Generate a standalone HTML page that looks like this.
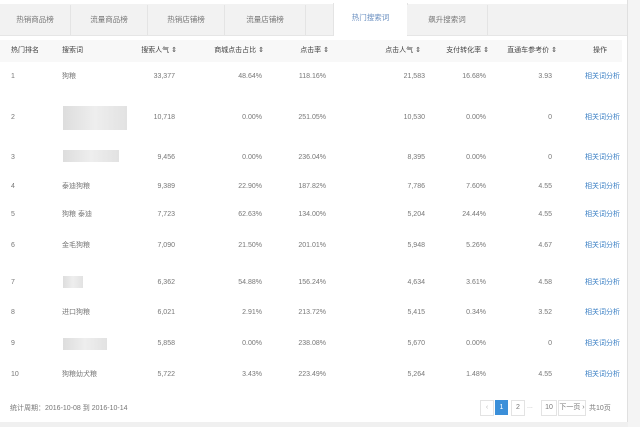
<!DOCTYPE html><html><head><meta charset="utf-8"><style>
body{margin:0;width:640px;height:427px;background:#f4f4f4;font-family:"Liberation Sans","Noto Sans CJK SC",sans-serif;font-size:7px;color:#777;position:relative;overflow:hidden}
.a{position:absolute;white-space:nowrap}
.tab{position:absolute;top:5px;height:30px;line-height:30px;text-align:center;background:#f2f2f2;border-right:1px solid #e4e4e4;color:#777;font-size:7.5px}
.r{position:absolute;left:0;width:630px;height:12px}
.r span{position:absolute;top:0;height:12px;line-height:12px;display:block;white-space:nowrap}
.t{text-align:right}
.blur{position:absolute;background:linear-gradient(90deg,#ddd,#eee,#e2e2e2);}
</style></head><body>
<div class="a" style="left:0;top:0;width:628px;height:427px;background:#fff"></div>
<div class="a" style="left:0;top:4px;width:628px;height:31px;background:#f2f2f2;border-bottom:1px solid #e6e6e6"></div>
<div class="tab" style="left:0;width:70px">热销商品榜</div>
<div class="tab" style="left:71px;width:76px">流量商品榜</div>
<div class="tab" style="left:148px;width:76px">热销店铺榜</div>
<div class="tab" style="left:225px;width:80px">流量店铺榜</div>
<div class="tab" style="left:333px;top:3px;height:33px;width:73px;background:#fff;color:#6a8fc0;border-right:1px solid #e4e4e4;border-left:1px solid #e4e4e4">热门搜索词</div>
<div class="tab" style="left:407px;width:80px">飙升搜索词</div>
<div class="a" style="left:627px;top:0;width:1px;height:427px;background:#e0e0e0"></div>
<div class="a" style="left:0;top:40px;width:622px;height:22px;background:#f8f8f8"></div>
<div class="r" style="top:45px;color:#444">
<span style="left:11px">热门排名</span><span style="left:62px">搜索词</span>
<span class="t" style="right:453px">搜索人气 ⇕</span><span class="t" style="right:366px">商城点击占比 ⇕</span>
<span class="t" style="right:301px">点击率 ⇕</span><span class="t" style="right:209px">点击人气 ⇕</span>
<span class="t" style="right:141px">支付转化率 ⇕</span><span class="t" style="right:73px">直通车参考价 ⇕</span>
<span style="left:593px">操作</span></div>
<div id="rows"></div>
<div class="blur" style="left:63px;top:106px;width:64px;height:24px"></div>
<div class="blur" style="left:63px;top:150px;width:56px;height:12px"></div>
<div class="blur" style="left:63px;top:276px;width:20px;height:12px"></div>
<div class="blur" style="left:63px;top:338px;width:44px;height:12px"></div>
<div class="a" style="left:10px;top:403px">统计周期：2016-10-08 到 2016-10-14</div>
<div class="a" style="left:480px;top:400px;width:12px;height:14px;border:1px solid #e3e3e3;text-align:center;line-height:14px;color:#bbb">‹</div>
<div class="a" style="left:495px;top:400px;width:13px;height:15px;background:#3b8fd9;color:#fff;text-align:center;line-height:15px">1</div>
<div class="a" style="left:511px;top:400px;width:12px;height:14px;border:1px solid #e3e3e3;text-align:center;line-height:14px">2</div>
<div class="a" style="left:527px;top:403px;color:#bbb">...</div>
<div class="a" style="left:541px;top:400px;width:14px;height:14px;border:1px solid #e3e3e3;text-align:center;line-height:14px">10</div>
<div class="a" style="left:558px;top:400px;width:26px;height:14px;border:1px solid #e3e3e3;text-align:center;line-height:14px">下一页 ›</div>
<div class="a" style="left:589px;top:403px">共10页</div>
<div class="a" style="left:0;top:422px;width:628px;height:5px;background:#f0f0f0"></div>
<script>
var d=[[77,"1","狗粮","33,377","48.64%","118.16%","21,583","16.68%","3.93"],
[118,"2","","10,718","0.00%","251.05%","10,530","0.00%","0"],
[158,"3","","9,456","0.00%","236.04%","8,395","0.00%","0"],
[187,"4","泰迪狗粮","9,389","22.90%","187.82%","7,786","7.60%","4.55"],
[215,"5","狗粮 泰迪","7,723","62.63%","134.00%","5,204","24.44%","4.55"],
[246,"6","金毛狗粮","7,090","21.50%","201.01%","5,948","5.26%","4.67"],
[283,"7","","6,362","54.88%","156.24%","4,634","3.61%","4.58"],
[313,"8","进口狗粮","6,021","2.91%","213.72%","5,415","0.34%","3.52"],
[344,"9","","5,858","0.00%","238.08%","5,670","0.00%","0"],
[375,"10","狗粮幼犬粮","5,722","3.43%","223.49%","5,264","1.48%","4.55"]];
var R=[455,368,304,205,144,78],h="";
d.forEach(function(r){h+='<div class="r" style="top:'+(r[0]-6)+'px"><span style="left:11px">'+r[1]+'</span><span style="left:62px">'+r[2]+'</span>';
for(var i=0;i<6;i++)h+='<span class="t" style="right:'+R[i]+'px">'+r[3+i]+'</span>';
h+='<span style="left:585px;color:#3a7fc4">相关词分析</span></div>';});
document.getElementById("rows").innerHTML=h;
</script>
</body></html>
